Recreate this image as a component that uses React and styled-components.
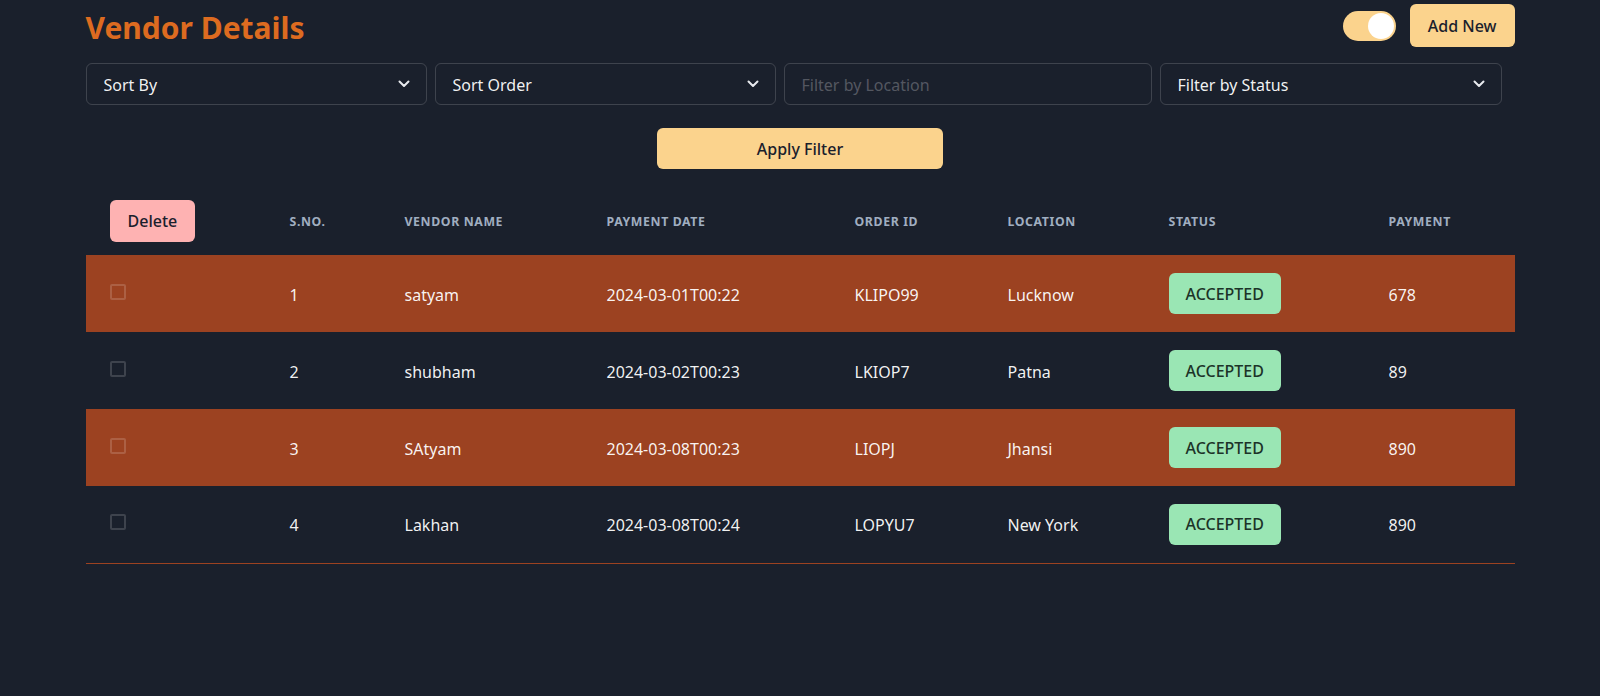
import styled, { createGlobalStyle } from "styled-components";

const vendors = [
  { id: 1, name: "satyam", date: "2024-03-01T00:22", order: "KLIPO99", location: "Lucknow", status: "ACCEPTED", payment: 678 },
  { id: 2, name: "shubham", date: "2024-03-02T00:23", order: "LKIOP7", location: "Patna", status: "ACCEPTED", payment: 89 },
  { id: 3, name: "SAtyam", date: "2024-03-08T00:23", order: "LIOPJ", location: "Jhansi", status: "ACCEPTED", payment: 890 },
  { id: 4, name: "Lakhan", date: "2024-03-08T00:24", order: "LOPYU7", location: "New York", status: "ACCEPTED", payment: 890 },
];

const columns = [
  { key: "select", width: 180 },
  { key: "sno", label: "S.No.", width: 115 },
  { key: "name", label: "Vendor Name", width: 202 },
  { key: "date", label: "Payment Date", width: 248 },
  { key: "order", label: "Order ID", width: 153 },
  { key: "location", label: "Location", width: 161 },
  { key: "status", label: "Status", width: 220 },
  { key: "payment", label: "Payment", width: 150 },
];

export default function App() {
  return (
    <>
      <GlobalStyle />
      <Page>
        <TopBar>
          <Title>Vendor Details</Title>
          <Actions>
            <Switch>
              <Thumb />
            </Switch>
            <YellowButton>Add New</YellowButton>
          </Actions>
        </TopBar>

        <FilterRow>
          <SelectBox>
            Sort By
            <Chevron />
          </SelectBox>
          <SelectBox>
            Sort Order
            <Chevron />
          </SelectBox>
          <TextInput placeholder="Filter by Location" />
          <SelectBox>
            Filter by Status
            <Chevron />
          </SelectBox>
        </FilterRow>

        <ApplyRow>
          <ApplyButton>Apply Filter</ApplyButton>
        </ApplyRow>

        <Table>
          <colgroup>
            {columns.map((c) => (
              <Col key={c.key} $w={c.width} />
            ))}
          </colgroup>
          <thead>
            <tr>
              <Th>
                <DeleteButton>Delete</DeleteButton>
              </Th>
              {columns.slice(1).map((c) => (
                <Th key={c.key}>{c.label}</Th>
              ))}
            </tr>
          </thead>
          <tbody>
            {vendors.map((v, i) => (
              <Row key={v.id} $odd={i % 2 === 0}>
                <Td>
                  <Checkbox />
                </Td>
                <Td>{v.id}</Td>
                <Td>{v.name}</Td>
                <Td>{v.date}</Td>
                <Td>{v.order}</Td>
                <Td>{v.location}</Td>
                <Td>
                  <Badge>{v.status}</Badge>
                </Td>
                <Td>{v.payment}</Td>
              </Row>
            ))}
          </tbody>
        </Table>
      </Page>
    </>
  );
}

function Chevron() {
  return (
    <svg width="12" height="8" viewBox="0 0 12 8" fill="none">
      <path d="M1.5 1.5 6 6l4.5-4.5" stroke="#e8eaee" strokeWidth="2" strokeLinecap="round" strokeLinejoin="round" />
    </svg>
  );
}

const GlobalStyle = createGlobalStyle`
  body {
    margin: 0;
    background: #1a202c;
    color: rgba(255, 255, 255, 0.94);
    font-family: "Noto Sans", "Open Sans", sans-serif;
  }
`;

const Page = styled.main`
  width: 1429px;
  margin: 0 auto;
`;

const TopBar = styled.header`
  display: flex;
  align-items: center;
  justify-content: space-between;
  padding-top: 4px;
  height: 43px;
`;

const Title = styled.h1`
  margin: 4px 0 0;
  font-size: 30px;
  font-weight: 700;
  color: #dd6b20;
  line-height: 1;
`;

const Actions = styled.div`
  display: flex;
  align-items: center;
  gap: 14px;
`;

const Switch = styled.div`
  width: 53px;
  height: 30px;
  box-sizing: border-box;
  padding: 2px;
  border-radius: 15px;
  background: #fbd38d;
  display: flex;
  justify-content: flex-end;
  align-items: center;
`;

const Thumb = styled.span`
  width: 26px;
  height: 26px;
  border-radius: 50%;
  background: #fff;
`;

const YellowButton = styled.button`
  height: 43px;
  padding: 0 18px;
  border: none;
  border-radius: 6px;
  background: #fbd38d;
  color: #1a202c;
  font-family: inherit;
  font-size: 16px;
  font-weight: 500;
`;

const FilterRow = styled.div`
  display: grid;
  grid-template-columns: 341px 341px 368px 342px;
  gap: 8px;
  margin-top: 16px;
`;

const SelectBox = styled.div`
  height: 42px;
  box-sizing: border-box;
  border: 1px solid rgba(255, 255, 255, 0.16);
  border-radius: 6px;
  padding: 2px 16px 0 17px;
  display: flex;
  align-items: center;
  justify-content: space-between;
  font-size: 16px;

  svg {
    margin-top: -2px;
  }
`;

const TextInput = styled.input`
  height: 42px;
  box-sizing: border-box;
  border: 1px solid rgba(255, 255, 255, 0.16);
  border-radius: 6px;
  padding: 2px 17px 0;
  background: transparent;
  color: inherit;
  font-family: inherit;
  font-size: 16px;
  outline: none;

  &::placeholder {
    color: rgba(255, 255, 255, 0.26);
  }
`;

const ApplyRow = styled.div`
  display: flex;
  justify-content: center;
  margin-top: 23px;
`;

const ApplyButton = styled(YellowButton)`
  width: 286px;
  height: 41px;
`;

const Table = styled.table`
  width: 100%;
  margin-top: 18px;
  border-collapse: collapse;
  table-layout: fixed;
  border-bottom: 1px solid #9c4221;
`;

const Col = styled.col`
  width: ${(p) => p.$w}px;
`;

const Th = styled.th`
  height: 68px;
  padding: 0 24px;
  text-align: left;
  font-size: 12.3px;
  font-weight: 700;
  letter-spacing: 0.05em;
  text-transform: uppercase;
  color: #a0aec0;
`;

const DeleteButton = styled.button`
  height: 42px;
  padding: 0 18px;
  border: none;
  border-radius: 6px;
  background: #feb2b2;
  color: #1a202c;
  font-family: inherit;
  font-size: 16px;
  font-weight: 500;
  letter-spacing: 0;
  text-transform: none;
`;

const Row = styled.tr`
  height: 77px;
  background: ${(p) => (p.$odd ? "#9c4221" : "transparent")};
`;

const Td = styled.td`
  padding: 2px 24px 0;
  font-size: 16px;
  vertical-align: middle;
`;

const Checkbox = styled.span`
  display: block;
  width: 16px;
  height: 16px;
  box-sizing: border-box;
  border: 2px solid rgba(255, 255, 255, 0.16);
  border-radius: 2px;
  margin-top: -6px;
`;

const Badge = styled.span`
  display: inline-flex;
  align-items: center;
  height: 41px;
  margin-top: -2px;
  padding: 0 17px;
  border-radius: 6px;
  background: #9ae6b4;
  color: #1c3328;
  font-size: 16px;
  font-weight: 500;
`;
